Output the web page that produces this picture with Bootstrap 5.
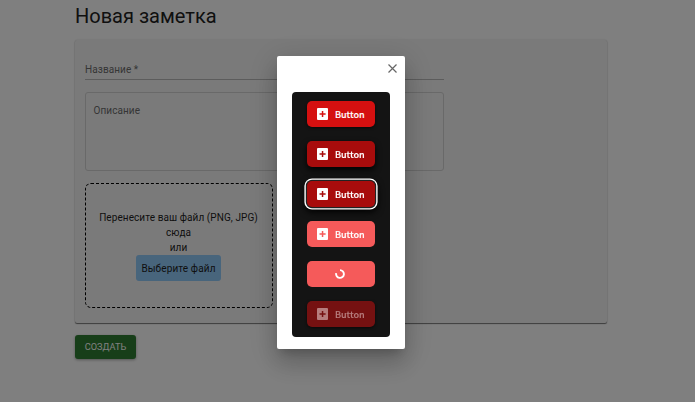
<!DOCTYPE html>
<html lang="ru">
<head>
<meta charset="utf-8">
<meta name="viewport" content="width=device-width, initial-scale=1">
<title>Новая заметка</title>
<link href="https://cdn.jsdelivr.net/npm/bootstrap@5.3.0/dist/css/bootstrap.min.css" rel="stylesheet">
<style>
body{font-family:Roboto,"Liberation Sans",sans-serif;font-size:10px;color:#212121;height:402px;overflow:hidden;background:#fff}
.page{width:532px;margin-left:75px;padding-top:4px}
.page h1{font-size:20px;line-height:24px;font-weight:400;margin-bottom:12px}
.paper{height:283px;padding:21px 10px 0;background:#f5f5f5;border-radius:2px;box-shadow:0 1px 1px rgba(0,0,0,.5),0 0 2px rgba(0,0,0,.16)}
.fld{width:359px;color:#6c6c6c;letter-spacing:.08px}
.fld-line{height:19px;line-height:18px;border-bottom:1px solid #b9b9b9}
.fld-box{height:79px;margin-top:12px;padding:10px 7.5px;border:1px solid #d2d2d2;border-radius:3px;line-height:15px}
.drop{width:188px;height:125px;margin-top:12px;padding:26px 1px 0 0;border:1px dashed #000;border-radius:6px;line-height:15px;letter-spacing:.08px;color:#1e1e1e}
.pick{width:85px;height:26px;flex:none;background:#90caf9;border-radius:3px;font-size:10px;line-height:27px;letter-spacing:.12px;color:#1e1e1e;white-space:nowrap}
.create{width:61px;height:24px;margin-top:12px;background:#2e7d32;border-radius:3px;color:#fff;font-size:9.2px;line-height:24px;box-shadow:0 1px 3px rgba(0,0,0,.35)}
.shade{background:rgba(0,0,0,.5);padding:56px 0 0 277.4px}
.dlg{width:127.6px;height:293px;border-radius:2px;padding:0 15px;box-shadow:0 7px 10px -4px rgba(0,0,0,.2),0 15px 24px 2px rgba(0,0,0,.14),0 6px 30px 5px rgba(0,0,0,.12)}
.dlg-top{height:36px;padding-top:8px;margin-right:-7px}
.board{height:244.5px;background:#141414;border-radius:4px;padding-top:9px;gap:14px}
.b{width:68px;height:26px;border-radius:5px;color:#fff;font:500 9.1px/25px "Noto Sans CJK SC",sans-serif;-webkit-text-stroke:.15px currentColor;padding-left:9.5px;background:#d51010;box-shadow:0 1px 3px rgba(0,0,0,.6)}
.b svg{flex:none;margin-right:7.2px}
.b.hov{background:#a80c0c;box-shadow:0 3px 6px rgba(0,0,0,.9)}
.b.foc{box-shadow:0 0 0 1.2px #222,0 0 0 2.6px #fff,0 3px 7px 2px #000}
.b.act{background:#f55a5a;box-shadow:none}
.b.off{background:#751111;color:#b67d7d}
.b.load{padding:0 2px 0 0}
.b.load svg{margin:0}
</style>
<script src="https://cdn.jsdelivr.net/npm/bootstrap@5.3.0/dist/js/bootstrap.bundle.min.js"></script>
</head>
<body>
<svg class="d-none"><symbol id="plus" viewBox="0 0 11 12"><path fill="currentColor" fill-rule="evenodd" d="M1 0H10Q11 0 11 1V11Q11 12 10 12H1Q0 12 0 11V1Q0 0 1 0ZM4.8 3V5.2H2.5V6.7H4.8V9H6.3V6.7H8.6V5.2H6.3V3Z"/></symbol></svg>
<main class="page">
<h1>Новая заметка</h1>
<section class="paper">
<div class="fld fld-line">Название *</div>
<div class="fld fld-box">Описание</div>
<div class="drop d-flex flex-column align-items-center text-center">
<div>Перенесите ваш файл (PNG, JPG)<br>сюда</div><div>или</div>
<button class="pick btn p-0 border-0">Выберите файл</button>
</div>
</section>
<button class="create btn p-0 border-0 d-block">СОЗДАТЬ</button>
</main>
<div class="shade position-fixed top-0 start-0 w-100 h-100">
<div class="dlg bg-white">
<div class="dlg-top d-flex justify-content-end align-items-start"><svg width="9" height="9" viewBox="0 0 9 9"><path d="M.5.5 8.5 8.5M8.5.5.5 8.5" stroke="#666" stroke-width="1.2"/></svg></div>
<div class="board d-flex flex-column align-items-center">
<div class="b d-flex align-items-center"><svg width="11" height="12"><use href="#plus"/></svg>Button</div>
<div class="b hov d-flex align-items-center"><svg width="11" height="12"><use href="#plus"/></svg>Button</div>
<div class="b hov foc d-flex align-items-center"><svg width="11" height="12"><use href="#plus"/></svg>Button</div>
<div class="b act d-flex align-items-center"><svg width="11" height="12"><use href="#plus"/></svg>Button</div>
<div class="b act load d-flex align-items-center justify-content-center"><svg width="10" height="10" viewBox="0 0 10 10"><path d="M5 1.1A3.9 3.9 0 1 1 1.2 4.1" fill="none" stroke="#fff" stroke-width="1.9"/></svg></div>
<div class="b off d-flex align-items-center"><svg width="11" height="12"><use href="#plus"/></svg>Button</div>
</div>
</div>
</div>
</body>
</html>
